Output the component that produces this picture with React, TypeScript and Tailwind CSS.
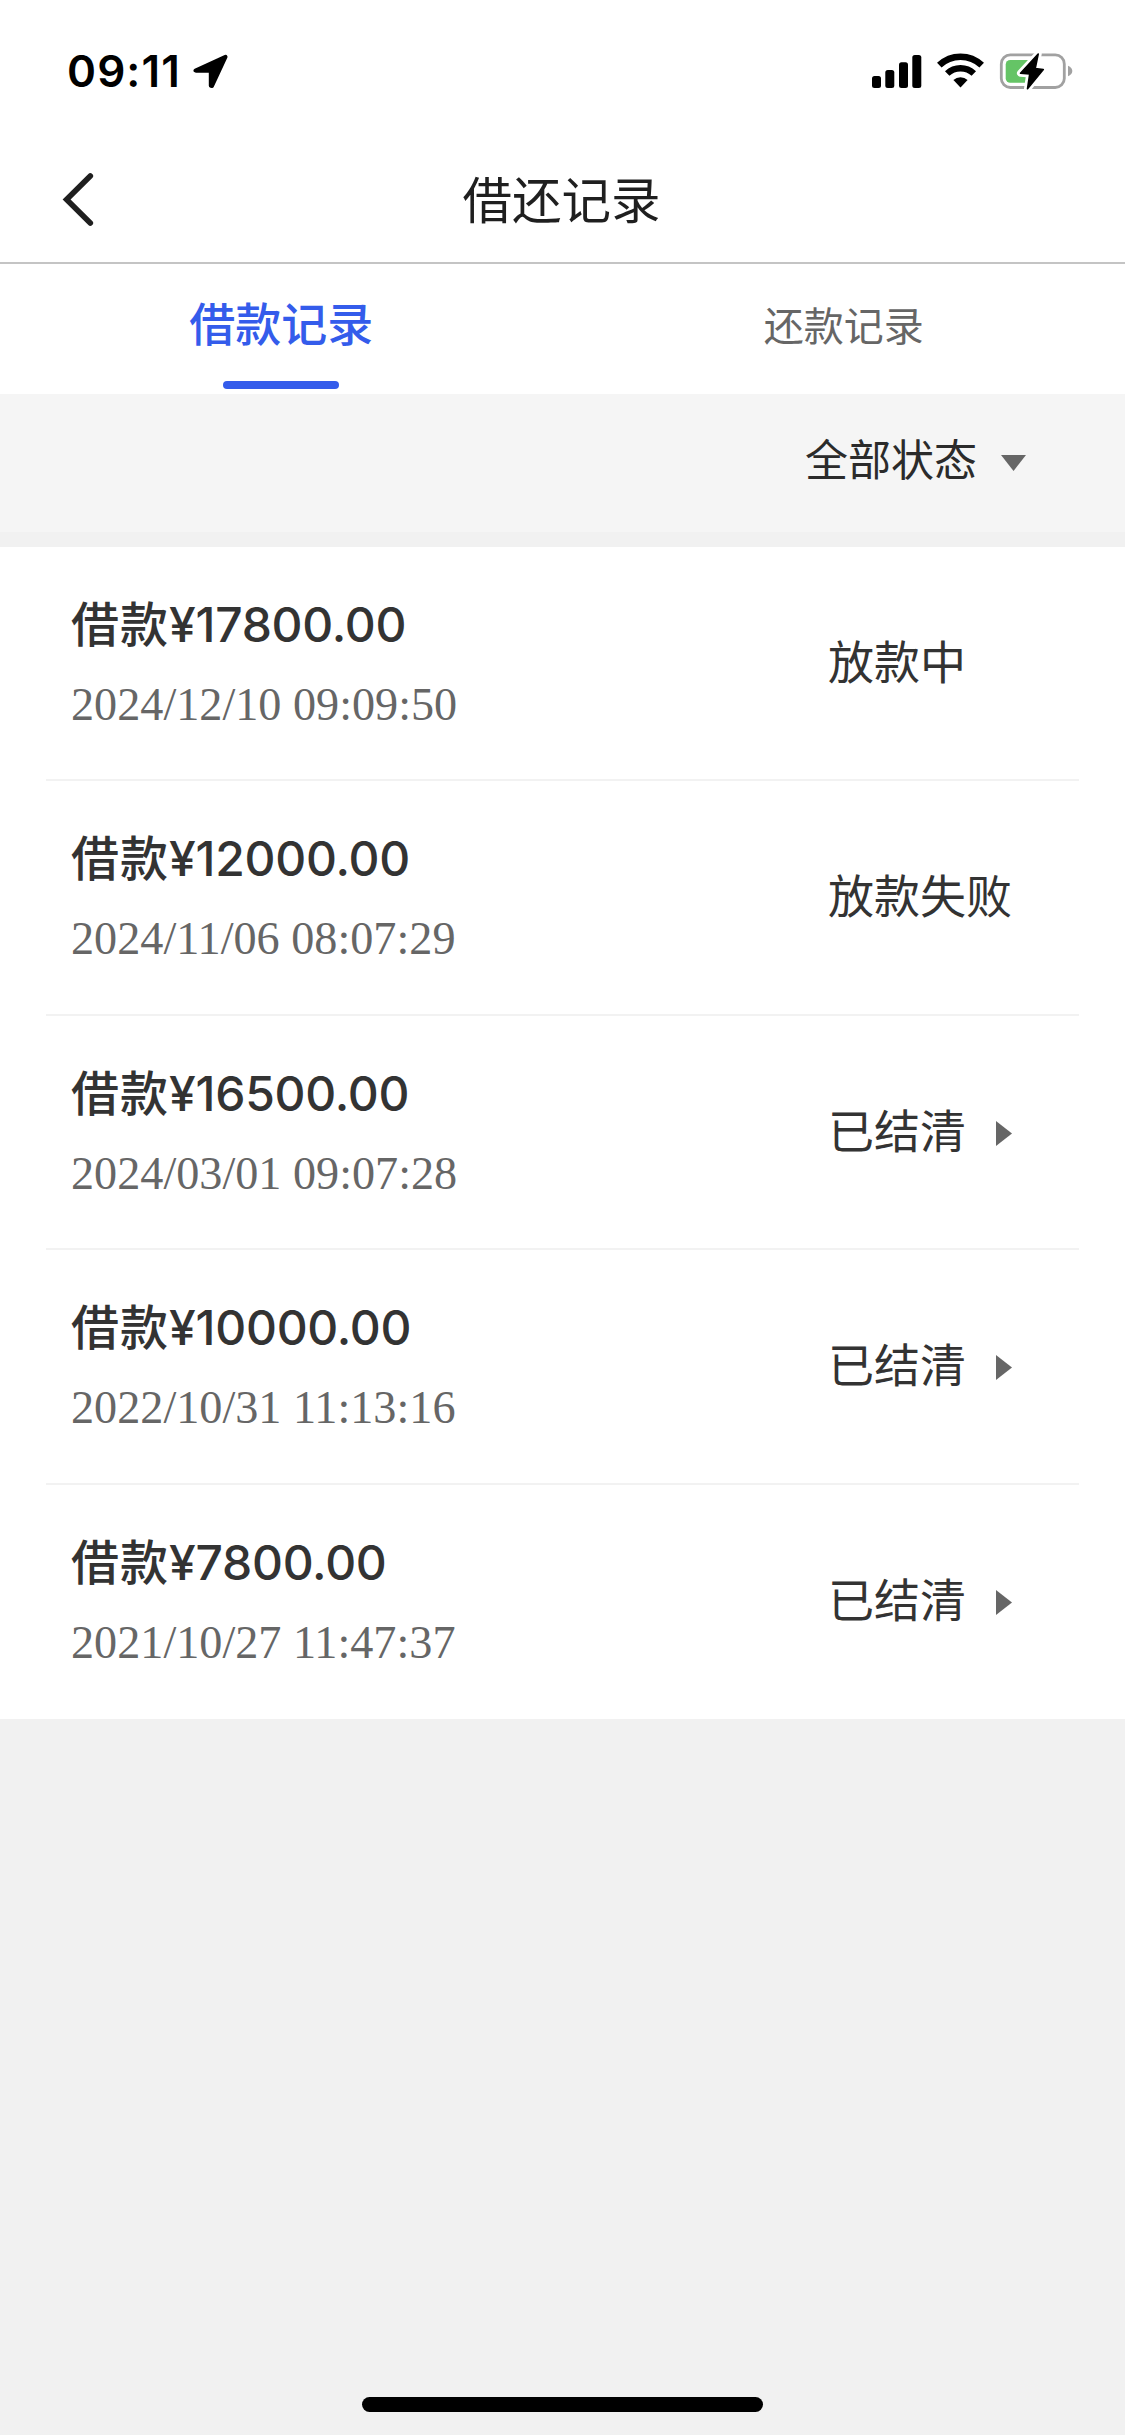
import React from 'react';

const records = [
    { id: 1, amount: '17800.00', time: '2024/12/10 09:09:50', status: '放款中', settled: false },
    { id: 2, amount: '12000.00', time: '2024/11/06 08:07:29', status: '放款失败', settled: false },
    { id: 3, amount: '16500.00', time: '2024/03/01 09:07:28', status: '已结清', settled: true },
    { id: 4, amount: '10000.00', time: '2022/10/31 11:13:16', status: '已结清', settled: true },
    { id: 5, amount: '7800.00', time: '2021/10/27 11:47:37', status: '已结清', settled: true },
];

const StatusBar: React.FC = () => (
    <div className="flex h-[142px] items-center justify-between pl-[67px] pr-[52px] text-black">
        <div className="flex items-center gap-[11px]">
            <span className="w-[115px] font-['Inter',sans-serif] text-[44px] font-semibold leading-none tracking-[1.1px]">09:11</span>
            <svg className="mt-[1px]" width="36" height="36" viewBox="0 0 36 36" fill="currentColor" stroke="currentColor" strokeWidth="4" strokeLinejoin="round">
                <path d="M2.5 16.5 32.5 2.8 19 32 17.8 31.8V16.7H3Z" />
            </svg>
        </div>
        <svg width="201" height="42" viewBox="0 0 201 42" fill="currentColor">
            {/* Signal */}
            <rect x="0" y="26" width="9" height="12" rx="2.5" />
            <rect x="13.3" y="20" width="9" height="18" rx="2.5" />
            <rect x="27" y="12.3" width="9" height="25.7" rx="2.5" />
            <rect x="40.3" y="5" width="9" height="33" rx="2.5" />
            {/* Wifi */}
            <path d="M67.3 15.2A30.8 30.8 0 0 1 109.7 15.2" fill="none" stroke="currentColor" strokeWidth="6.6" />
            <path d="M75.2 23.5A19.3 19.3 0 0 1 101.8 23.5" fill="none" stroke="currentColor" strokeWidth="6.4" />
            <path d="M81.4 30A10.3 10.3 0 0 1 95.6 30L88.5 37.5Z" />
            {/* Battery */}
            <rect x="129.3" y="4.9" width="63" height="32.6" rx="9" fill="none" stroke="#a1a1a1" strokeWidth="2.8" />
            <rect x="133.7" y="10" width="26" height="22.7" rx="4.5" fill="#65c466" />
            <path d="M196 15.7Q200.3 17.5 200.3 21T196 26.3Z" fill="#a1a1a1" />
            <path
                d="M166.2 4 148.5 23.2 157.7 24 155.5 38.8 171.3 19.6 163.2 18.6Z"
                fill="#fff"
                stroke="#fff"
                strokeWidth="7"
                strokeLinejoin="round"
            />
            <path
                d="M166.2 4 148.5 23.2 157.7 24 155.5 38.8 171.3 19.6 163.2 18.6Z"
                stroke="currentColor"
                strokeWidth="1.6"
                strokeLinejoin="round"
            />
        </svg>
    </div>
);

export default function App() {
    return (
        <div className="flex h-[2435px] w-[1125px] flex-col bg-[#f1f1f1] font-['Liberation_Sans','Noto_Sans_CJK_SC',sans-serif]">
            {/* Header */}
            <header className="h-[264px] border-b-2 border-[#c4c4c4] bg-white">
                <StatusBar />
                <div className="grid h-[116px] grid-cols-[1fr_auto_1fr] items-center pl-[62px]">
                    <svg width="32" height="54" viewBox="0 0 32 54" fill="none" stroke="#1f1f1f" strokeWidth="5.6" strokeLinecap="round">
                        <path d="M28.3 3 4.6 26.5 28.3 50" />
                    </svg>
                    <h1 className="-ml-[64px] pt-[4px] text-[49.5px] leading-none text-[#1f1f1f]">借还记录</h1>
                </div>
            </header>

            {/* Tabs */}
            <div className="grid h-[130px] grid-cols-2 bg-white text-center">
                <button className="flex flex-col items-center justify-between pb-[5px] pt-[38px]">
                    <span className="text-[46px] font-medium leading-none text-[#345ceb]">借款记录</span>
                    <span className="h-[8px] w-[116px] rounded-full bg-[#345ceb]" />
                </button>
                <button className="flex items-start justify-center pt-[43px] text-[40px] leading-none text-[#666]">还款记录</button>
            </div>

            {/* Filter */}
            <div className="flex h-[138px] items-center justify-end gap-[24px] bg-[#f5f5f5] pr-[99px]">
                <span className="mb-[3px] text-[43px] leading-none text-[#2b2b2b]">全部状态</span>
                <svg width="25" height="16" viewBox="0 0 25 16" fill="#666">
                    <path d="M0 0H25L12.5 16Z" />
                </svg>
            </div>

            {/* Records */}
            <div className="mt-[15px] bg-white px-[46px]">
                {records.map((record) => (
                    <div key={record.id} className="flex h-[234.4px] justify-between border-b-2 border-[#f2f2f2] pl-[25px] last:border-b-0">
                        <div className="pt-[48px]">
                            <p className="font-['Inter','Noto_Sans_CJK_SC',sans-serif] text-[48px] font-medium leading-[60px] tracking-[-0.25px] text-[#333]">
                                <span className="tracking-[1px]">借款</span>¥{record.amount}
                            </p>
                            <p className="mt-[22px] font-['Liberation_Serif',serif] text-[46.2px] leading-[56px] text-[#666]">{record.time}</p>
                        </div>
                        <div className="mt-[91px] flex h-[50px] w-[251px] items-center gap-[30px] text-[46px] leading-none text-[#333]">
                            <span>{record.status}</span>
                            {record.settled && (
                                <svg className="mt-[3px]" width="16" height="25" viewBox="0 0 16 25" fill="#666">
                                    <path d="M0 0V25L16 12.5Z" />
                                </svg>
                            )}
                        </div>
                    </div>
                ))}
            </div>

            {/* Home indicator */}
            <div className="mx-auto mb-[23px] mt-auto h-[15px] w-[401px] rounded-full bg-black" />
        </div>
    );
}
